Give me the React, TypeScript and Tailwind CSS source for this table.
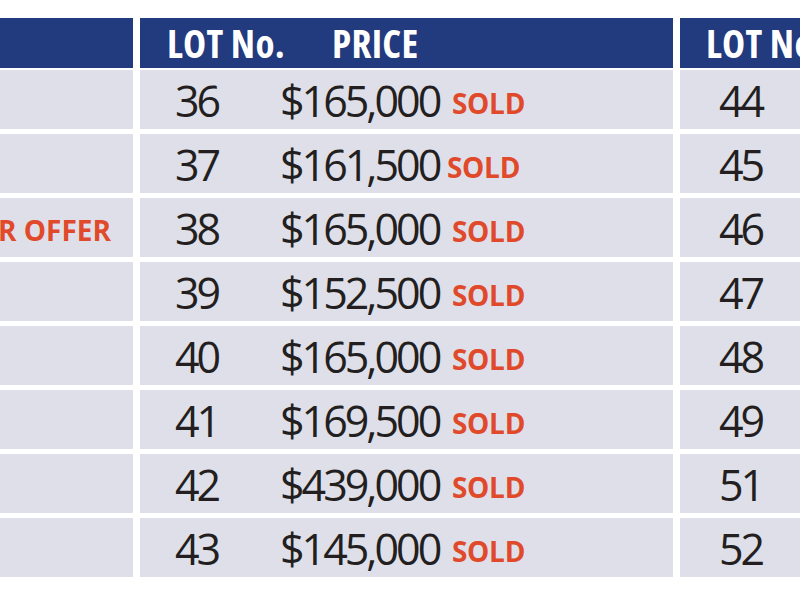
import React from "react";

const rows = [
  { lot: "36", price: "$165,000", side: "44" },
  { lot: "37", price: "$161,500", side: "45", shift: true },
  { lot: "38", price: "$165,000", side: "46", offer: true },
  { lot: "39", price: "$152,500", side: "47" },
  { lot: "40", price: "$165,000", side: "48" },
  { lot: "41", price: "$169,500", side: "49" },
  { lot: "42", price: "$439,000", side: "51" },
  { lot: "43", price: "$145,000", side: "52" },
];

const font = { fontFamily: '"Open Sans", "Noto Sans", sans-serif' };

export default function App() {
  return (
    <div className="w-[800px] h-[600px] bg-white overflow-hidden flex gap-[7px] pt-[18px]" style={font}>
      {/* left panel, cut off by the frame */}
      <div className="w-[133px] shrink-0 flex flex-col">
        <div className="h-[50px] bg-[#223a7e]" />
        <div className="mt-[2px] flex flex-col gap-[5px]">
          {rows.map((r) => (
            <div key={r.lot} className="h-[59px] bg-[#dfdfea] flex items-center justify-end pr-[22px] overflow-hidden">
              {r.offer && (
                <span className="whitespace-nowrap font-bold text-[28px] text-[#e04a2b] pt-[4px]">
                  UNDER OFFER
                </span>
              )}
            </div>
          ))}
        </div>
      </div>

      {/* middle panel */}
      <div className="w-[533px] shrink-0 flex flex-col">
        <div className="h-[50px] bg-[#223a7e] flex items-center text-white font-bold font-stretch-semi-condensed text-[39px] tracking-[0.3px]">
          <span className="pl-[27px] w-[192px] whitespace-nowrap">LOT No.</span>
          <span className="whitespace-nowrap">PRICE</span>
        </div>
        <div className="mt-[2px] flex flex-col gap-[5px]">
          {rows.map((r) => (
            <div key={r.lot} className="h-[59px] bg-[#dfdfea] flex items-center text-[#231f20]">
              <span className="pl-[35px] w-[140px] text-[43px] tracking-[-3px] pt-[4px]">{r.lot}</span>
              <span className={(r.shift ? "w-[167px]" : "w-[172px]") + " text-[43px] tracking-[-3px] pt-[4px] whitespace-nowrap"}>
                {r.price}
              </span>
              <span className="font-bold text-[28px] text-[#e04a2b] tracking-[-0.3px] pt-[7px]">SOLD</span>
            </div>
          ))}
        </div>
      </div>

      {/* right panel, cut off */}
      <div className="flex-1 flex flex-col overflow-hidden">
        <div className="h-[50px] bg-[#223a7e] flex items-center text-white font-bold font-stretch-semi-condensed text-[39px] tracking-[0.3px]">
          <span className="pl-[26px] whitespace-nowrap">LOT No.</span>
        </div>
        <div className="mt-[2px] flex flex-col gap-[5px]">
          {rows.map((r) => (
            <div key={r.side} className="h-[59px] bg-[#dfdfea] flex items-center text-[#231f20]">
              <span className="pl-[39px] text-[43px] tracking-[-3px] pt-[4px]">{r.side}</span>
            </div>
          ))}
        </div>
      </div>
    </div>
  );
}
